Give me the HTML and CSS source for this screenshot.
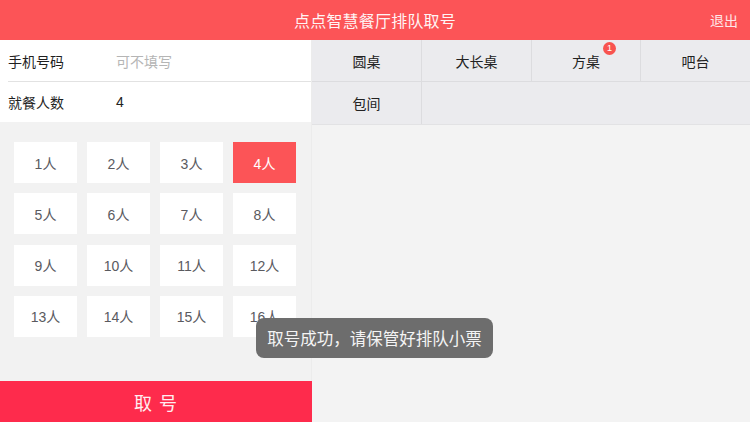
FILE: index.html
```html
<!DOCTYPE html>
<html lang="zh-CN">
<head>
<meta charset="utf-8">
<title>点点智慧餐厅排队取号</title>
<link rel="stylesheet" href="styles.css">
</head>
<body>
<div class="app">
  <header class="topbar">
    <span></span>
    <h1 class="title">点点智慧餐厅排队取号</h1>
    <a class="exit">退出</a>
  </header>
  <main class="main">
    <section class="left">
      <div class="form">
        <div class="row">
          <span class="label">手机号码</span>
          <span class="placeholder">可不填写</span>
        </div>
        <div class="row">
          <span class="label">就餐人数</span>
          <span class="value">4</span>
        </div>
      </div>
      <div class="people">
        <div class="pbtn">1人</div>
        <div class="pbtn">2人</div>
        <div class="pbtn">3人</div>
        <div class="pbtn active">4人</div>
        <div class="pbtn">5人</div>
        <div class="pbtn">6人</div>
        <div class="pbtn">7人</div>
        <div class="pbtn">8人</div>
        <div class="pbtn">9人</div>
        <div class="pbtn">10人</div>
        <div class="pbtn">11人</div>
        <div class="pbtn">12人</div>
        <div class="pbtn">13人</div>
        <div class="pbtn">14人</div>
        <div class="pbtn">15人</div>
        <div class="pbtn">16人</div>
      </div>
      <div class="spacer"></div>
      <button class="take">取 号</button>
    </section>
    <section class="right">
      <div class="tables">
        <div class="cell">圆桌</div>
        <div class="cell">大长桌</div>
        <div class="cell">方桌<span class="badge">1</span></div>
        <div class="cell">吧台</div>
        <div class="cell">包间</div>
      </div>
    </section>
  </main>
  <div class="toast">取号成功，请保管好排队小票</div>
</div>
</body>
</html>
```
FILE: styles.css
```css
* { box-sizing: border-box; }
html, body {
  margin: 0;
  padding: 0;
  width: 750px;
  height: 422px;
  overflow: hidden;
  font-family: "Liberation Sans", "Noto Sans CJK SC", sans-serif;
  background: #f2f2f2;
}
.app {
  position: relative;
  width: 750px;
  height: 422px;
  display: flex;
  flex-direction: column;
}
.topbar {
  height: 40px;
  background: #fc5457;
  display: grid;
  grid-template-columns: 1fr auto 1fr;
  align-items: center;
  color: #fff;
}
.title {
  margin: 0;
  font-size: 16px;
  font-weight: normal;
  color: #fff5f5;
  letter-spacing: 0.2px;
}
.exit {
  justify-self: end;
  padding-right: 12px;
  font-size: 14px;
  color: #ffe6e8;
}
.main {
  flex: 1;
  display: flex;
  min-height: 0;
}
.left {
  width: 312px;
  display: flex;
  flex-direction: column;
  background: #f2f2f2;
  border-right: 1px solid #ececec;
}
.form {
  background: #fff;
}
.row {
  height: 41px;
  display: flex;
  align-items: center;
  padding-left: 8px;
  font-size: 14px;
}
.row + .row {
  border-top: 1px solid #e2e2e2;
  margin-left: 8px;
  padding-left: 0;
}
.label {
  width: 108px;
  color: #1f1f1f;
}
.placeholder { color: #b5b5b5; }
.value { color: #222; }
.people {
  display: grid;
  grid-template-columns: repeat(4, 63px);
  grid-auto-rows: 41px;
  column-gap: 10px;
  row-gap: 10.3px;
  padding: 20px 0 0 14px;
}
.pbtn {
  background: #fff;
  display: flex;
  align-items: center;
  justify-content: center;
  font-size: 14px;
  color: #5a5a5f;
}
.pbtn.active {
  background: #fc5457;
  color: #fff;
}
.spacer { flex: 1; }
.take {
  height: 41px;
  border: 0;
  margin: 0;
  width: 312px;
  background: #fe2b4c;
  color: #ffeef0;
  font-family: inherit;
  font-size: 18px;
  letter-spacing: 1px;
}
.right {
  flex: 1;
  background: #f3f3f3;
}
.tables {
  display: grid;
  grid-template-columns: 110px 110px 109px 1fr;
  grid-auto-rows: 42px;
  background: #ebebee;
  border-bottom: 1px solid #e2e2e4;
}
.cell {
  position: relative;
  display: flex;
  align-items: center;
  justify-content: center;
  font-size: 14px;
  color: #222;
  border-right: 1px solid #dcdcdf;
  border-bottom: 1px solid #dcdcdf;
}
.cell:nth-child(4) { border-right: 0; }
.cell:nth-child(5) { border-bottom: 0; }
.badge {
  position: absolute;
  top: 2px;
  left: calc(50% + 17px);
  width: 13px;
  height: 13px;
  border-radius: 50%;
  background: #f8534f;
  color: #fff;
  font-size: 9px;
  line-height: 13px;
  text-align: center;
}
.toast {
  position: absolute;
  left: 256px;
  top: 318px;
  width: 237px;
  height: 40px;
  border-radius: 8px;
  background: #6d6d6d;
  color: #f4f4f4;
  font-size: 16.5px;
  display: flex;
  align-items: center;
  justify-content: center;
}
```
